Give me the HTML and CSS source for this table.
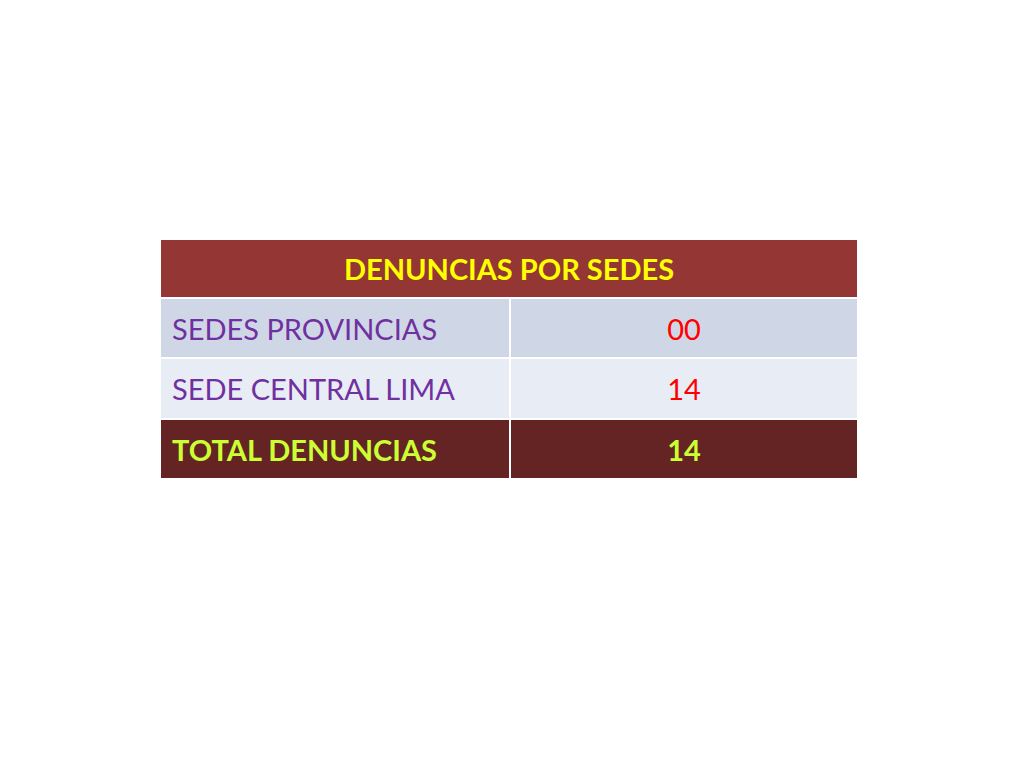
FILE: index.html
```html
<!DOCTYPE html>
<html lang="es">
<head>
<meta charset="utf-8">
<title>Denuncias por sedes</title>
<link rel="stylesheet" href="styles.css">
</head>
<body>
<div class="slide">
  <table class="sedes">
    <thead>
      <tr><th colspan="2" class="head">DENUNCIAS POR SEDES</th></tr>
    </thead>
    <tbody>
      <tr class="r1"><td class="label">SEDES PROVINCIAS</td><td class="num">00</td></tr>
      <tr class="r2"><td class="label">SEDE CENTRAL LIMA</td><td class="num">14</td></tr>
      <tr class="total"><td class="label">TOTAL DENUNCIAS</td><td class="num">14</td></tr>
    </tbody>
  </table>
</div>
</body>
</html>
```
FILE: styles.css
```css
html, body {
  margin: 0;
  padding: 0;
  background: #ffffff;
}
.slide {
  width: 1024px;
  height: 768px;
  box-sizing: border-box;
  padding: 238px 0 0 159px;
  font-family: Lato, "Open Sans", sans-serif;
}
.sedes {
  border-collapse: collapse;
  width: 700px;
}
.sedes th, .sedes td {
  border: 2px solid #ffffff;
  padding: 0;
  vertical-align: middle;
  font-size: 29px;
  line-height: 1;
}
.head {
  background: #943634;
  color: #ffff00;
  font-weight: bold;
  text-align: center;
  height: 57px;
}
.label {
  width: 337px;
  padding-left: 11px !important;
  text-align: left;
}
.num {
  text-align: center;
}
.r1 td, .r2 td {
  color: #7030a0;
}
.r1 .num, .r2 .num {
  color: #ff0000;
}
.r1 td {
  background: #cfd7e6;
  height: 58px;
}
.r2 td {
  background: #e8ecf4;
  height: 59px;
}
.total td {
  background: #632423;
  color: #ccff33;
  font-weight: bold;
  height: 58px;
}
```
